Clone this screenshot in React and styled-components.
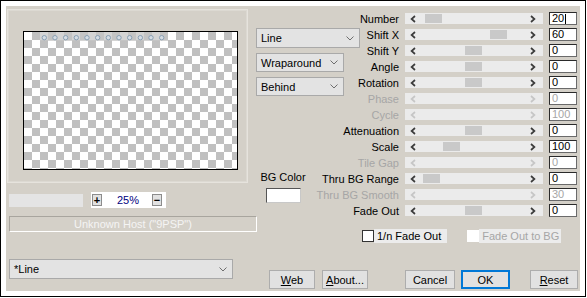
import React from 'react';
import styled, { createGlobalStyle } from 'styled-components';

const Global = createGlobalStyle`
  html, body { margin: 0; padding: 0; background: #fff; }
  body {
    font-family: "Liberation Sans", Arial, sans-serif;
    font-size: 11px;
    color: #000;
  }
  * { box-sizing: border-box; }
`;

const Frame = styled.div`
  width: 586px;
  height: 297px;
  border: 1px solid #000;
  padding: 5px;
  background: #fff;
  display: flex;
`;

const Panel = styled.div`
  flex: 1;
  background: #d4d0c8;
  display: flex;
`;

const LeftCol = styled.div`
  width: 250px;
  flex: none;
  display: flex;
  flex-direction: column;
`;

const GroupBox = styled.div`
  margin: 3px 0 0 1px;
  width: 241px;
  height: 174px;
  border: 1px solid #e6e3dd;
  box-shadow: inset 0 0 0 1px #dcd9d2;
  padding: 21px 0 0 15px;
`;

const Checker = styled.div`
  position: relative;
  width: 215px;
  height: 139px;
  border: 1px solid #000;
  background-color: #fff;
  background-image: conic-gradient(#c0c0c0 25%, #fff 0 50%, #c0c0c0 0 75%, #fff 0);
  background-size: 16px 16px;
`;

const DotsLayer = styled.svg`
  position: absolute;
  left: 0;
  top: 0;
`;

const ZoomRow = styled.div`
  margin: 9px 0 0 3px;
  height: 16px;
  display: flex;
  align-items: center;
  gap: 8px;
`;

const GrayField = styled.div`
  width: 74px;
  height: 13px;
  background: #e4e4e4;
`;

const ZoomBox = styled.div`
  width: 75px;
  height: 16px;
  background: #fff;
  display: flex;
  align-items: center;
  padding: 0 4px 0 1px;
`;

const TinyBtn = styled.div`
  width: 10px;
  height: 12px;
  border: 1px solid #8c8c8c;
  background: #e2e2e2;
  display: flex;
  align-items: center;
  justify-content: center;
  font-size: 11px;
  font-weight: bold;
  line-height: 1;
`;

const ZoomText = styled.div`
  flex: 1;
  text-align: center;
  color: #000080;
  font-size: 11px;
  padding-left: 2px;
`;

const HostBox = styled.div`
  margin: 8px 0 0 3px;
  width: 248px;
  height: 16px;
  border-top: 1px solid #a8a59e;
  border-left: 1px solid #a8a59e;
  border-bottom: 1px solid #fff;
  border-right: 1px solid #fff;
  color: #f4f4f4;
  text-align: center;
  line-height: 14px;
`;

const Select = styled.div`
  margin: ${p => p.$mt || 0}px 0 0 ${p => p.$ml || 0}px;
  width: ${p => p.$w}px;
  height: ${p => p.$h}px;
  background: #e3e3e3;
  border: 1px solid #a9a9a9;
  display: flex;
  align-items: center;
  justify-content: space-between;
  padding: 0 5px 0 4px;
`;

const Chevron = () => (
  <svg width="8" height="5" viewBox="0 0 8 5">
    <path d="M0.5 0.5 L4 4 L7.5 0.5" fill="none" stroke="#6e6e6e" strokeWidth="1" />
  </svg>
);

const RightArea = styled.div`
  flex: 1;
  display: flex;
  flex-direction: column;
`;

const TopRow = styled.div`
  display: flex;
  padding-top: 6px;
`;

const MidCol = styled.div`
  width: 104px;
  flex: none;
  display: flex;
  flex-direction: column;
  padding-top: 16px;
  gap: 5px;
`;

const BgColor = styled.div`
  margin: 70px 0 0 6px;
  width: 42px;
  display: flex;
  flex-direction: column;
  align-items: center;
  gap: 4px;
`;

const BgLabel = styled.div`
  line-height: 13px;
  white-space: nowrap;
`;

const Swatch = styled.div`
  width: 35px;
  height: 15px;
  background: #fff;
  border-top: 1px solid #555;
  border-left: 1px solid #555;
  border-right: 1px solid #c8c8c8;
  border-bottom: 1px solid #c8c8c8;
`;

const SliderGrid = styled.div`
  display: grid;
  grid-template-columns: 39px 138px 28px;
  grid-auto-rows: 13px;
  column-gap: 6px;
  row-gap: 3px;
`;

const Label = styled.div`
  display: flex;
  justify-content: flex-end;
  align-items: center;
  white-space: nowrap;
  color: ${p => (p.$disabled ? '#a6a6a6' : '#000')};
`;

const Track = styled.div`
  position: relative;
  align-self: center;
  height: 11px;
  background: #ebebeb;
  display: flex;
  align-items: center;
  justify-content: space-between;
  padding: 0 7px 0 5px;
`;

const Thumb = styled.div`
  position: absolute;
  top: 1px;
  left: ${p => p.$pos}px;
  width: 17px;
  height: 9px;
  background: #c9c9c9;
`;

const Arrow = ({ dir, disabled }) => (
  <svg width="6" height="8" viewBox="0 0 6 8">
    <path
      d={dir === 'left' ? 'M5 1 L1.6 4 L5 7' : 'M1 1 L4.4 4 L1 7'}
      fill="none"
      stroke={disabled ? '#c6c6c6' : '#3c3c3c'}
      strokeWidth="1.7"
    />
  </svg>
);

const ValueBox = styled.div`
  height: 13px;
  background: #fff;
  border-top: 1px solid #2a2a2a;
  border-left: 1px solid #2a2a2a;
  border-right: 1px solid #6a6a6a;
  border-bottom: 1px solid #6a6a6a;
  padding-left: 2px;
  line-height: 11px;
  display: flex;
  align-items: center;
  color: ${p => (p.$disabled ? '#a6a6a6' : '#000')};
`;

const Caret = styled.span`
  display: inline-block;
  width: 1px;
  height: 10px;
  background: #000;
  margin-left: 1px;
`;

const CheckRow = styled.div`
  margin: 12px 0 0 106px;
  height: 14px;
  display: flex;
  align-items: center;
`;

const CheckBox = styled.div`
  width: 12px;
  height: 12px;
  background: #fff;
  border: 1px solid ${p => (p.$disabled ? '#fff' : '#333')};
  margin-left: ${p => p.$ml || 0}px;
`;

const CheckLabel = styled.div`
  height: 14px;
  background: #ececec;
  padding: 0 ${p => p.$pr}px 0 3px;
  line-height: 14px;
  white-space: nowrap;
  color: ${p => (p.$disabled ? '#a6a6a6' : '#000')};
`;

const ButtonRow = styled.div`
  margin: 27px 0 0 13px;
  display: flex;
  height: 19px;
`;

const Button = styled.div`
  width: ${p => p.$w}px;
  height: 19px;
  margin-left: ${p => p.$ml || 0}px;
  background: #e1e1e1;
  border: ${p => (p.$focus ? '2px solid #0078d7' : '1px solid #adadad')};
  display: flex;
  align-items: center;
  justify-content: center;
  white-space: nowrap;
`;

const U = styled.span`
  text-decoration: underline;
`;

const sliders = [
  { label: 'Number', value: '20', pos: 20, caret: true },
  { label: 'Shift X', value: '60', pos: 85 },
  { label: 'Shift Y', value: '0', pos: 60 },
  { label: 'Angle', value: '0', pos: 60 },
  { label: 'Rotation', value: '0', pos: 60 },
  { label: 'Phase', value: '0', disabled: true },
  { label: 'Cycle', value: '100', disabled: true },
  { label: 'Attenuation', value: '0', pos: 60 },
  { label: 'Scale', value: '100', pos: 38 },
  { label: 'Tile Gap', value: '0', disabled: true },
  { label: 'Thru BG Range', value: '0', pos: 18 },
  { label: 'Thru BG Smooth', value: '30', disabled: true },
  { label: 'Fade Out', value: '0', pos: 60 },
];

const dots = Array.from({ length: 12 }, (_, i) => 20.3 + i * 10.67);

export default function App() {
  return (
    <>
      <Global />
      <Frame>
        <Panel>
          <LeftCol>
            <GroupBox>
              <Checker>
                <DotsLayer width="213" height="137" viewBox="0 0 213 137">
                  <rect x="16" y="0" width="128" height="9" fill="#c6c6c6" opacity="0.75" />
                  {dots.map((x, i) => (
                    <circle key={i} cx={x} cy="5.7" r="2.2" fill="#d6dde4" stroke="#8aa0b4" strokeWidth="1" />
                  ))}
                </DotsLayer>
              </Checker>
            </GroupBox>
            <ZoomRow>
              <GrayField />
              <ZoomBox>
                <TinyBtn>+</TinyBtn>
                <ZoomText>25%</ZoomText>
                <TinyBtn>−</TinyBtn>
              </ZoomBox>
            </ZoomRow>
            <HostBox>Unknown Host ("9PSP")</HostBox>
            <Select $mt={27} $ml={3} $w={224} $h={20}>
              <span>*Line</span>
              <Chevron />
            </Select>
          </LeftCol>
          <RightArea>
            <TopRow>
              <MidCol>
                <Select $w={104} $h={20}>
                  <span>Line</span>
                  <Chevron />
                </Select>
                <Select $w={88} $h={19}>
                  <span>Wraparound</span>
                  <Chevron />
                </Select>
                <Select $w={88} $h={19}>
                  <span>Behind</span>
                  <Chevron />
                </Select>
                <BgColor>
                  <BgLabel>BG Color</BgLabel>
                  <Swatch />
                </BgColor>
              </MidCol>
              <SliderGrid>
                {sliders.map(s => (
                  <React.Fragment key={s.label}>
                    <Label $disabled={s.disabled}>{s.label}</Label>
                    <Track>
                      <Arrow dir="left" disabled={s.disabled} />
                      {!s.disabled && <Thumb $pos={s.pos} />}
                      <Arrow dir="right" disabled={s.disabled} />
                    </Track>
                    <ValueBox $disabled={s.disabled}>
                      {s.value}
                      {s.caret && <Caret />}
                    </ValueBox>
                  </React.Fragment>
                ))}
              </SliderGrid>
            </TopRow>
            <CheckRow>
              <CheckBox />
              <CheckLabel $pr={6}>1/n Fade Out</CheckLabel>
              <CheckBox $disabled $ml={20} />
              <CheckLabel $pr={2} $disabled>Fade Out to BG</CheckLabel>
            </CheckRow>
            <ButtonRow>
              <Button $w={46}><span><U>W</U>eb</span></Button>
              <Button $w={46} $ml={7}><span><U>A</U>bout...</span></Button>
              <Button $w={50} $ml={37}>Cancel</Button>
              <Button $w={49} $ml={6} $focus>OK</Button>
              <Button $w={48} $ml={20}><span><U>R</U>eset</span></Button>
            </ButtonRow>
          </RightArea>
        </Panel>
      </Frame>
    </>
  );
}
